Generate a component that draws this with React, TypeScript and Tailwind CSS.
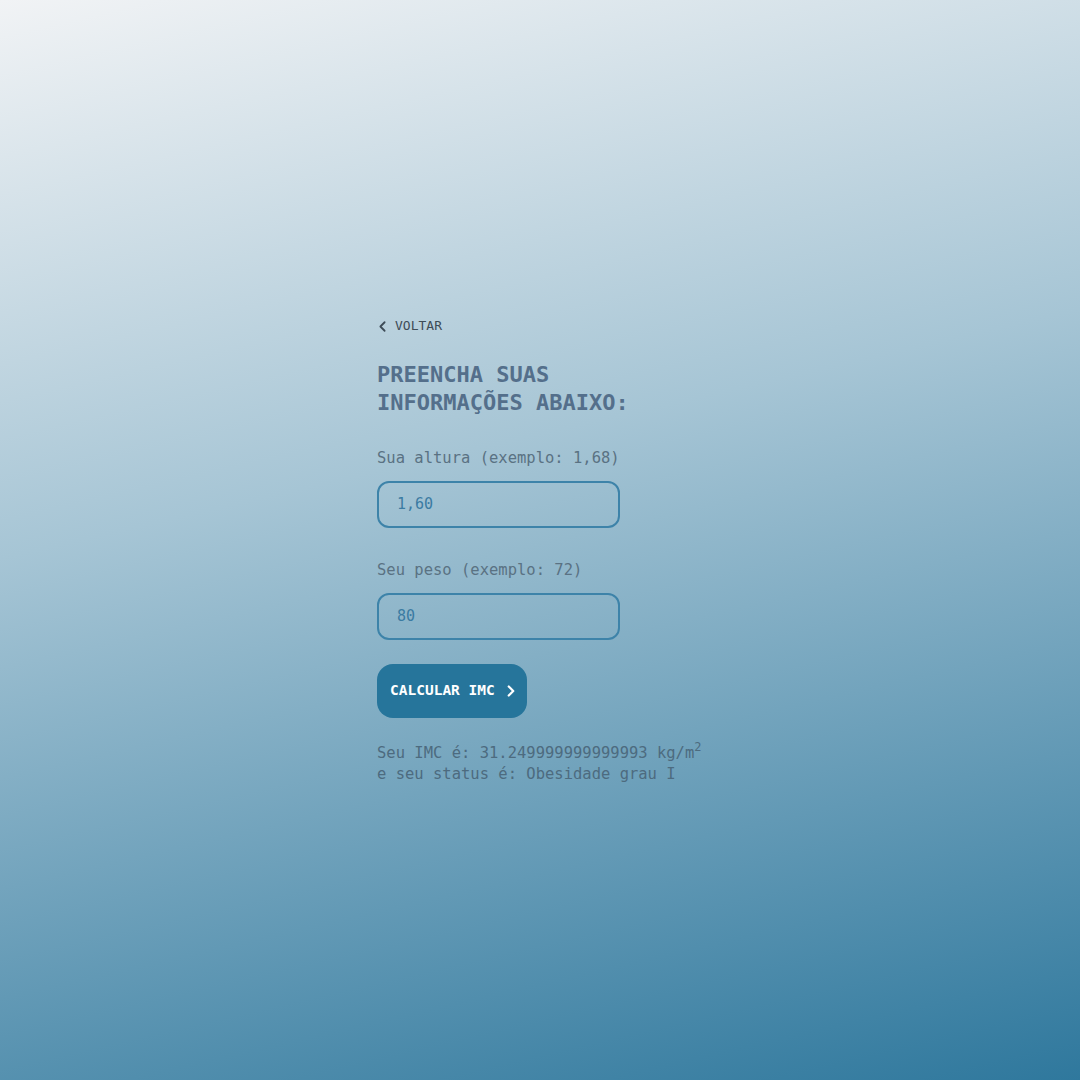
import { ChevronLeft, ChevronRight } from "lucide-react";

const mono = "font-['DejaVu_Sans_Mono','Liberation_Mono',monospace]";

export default function App() {
  return (
    <div
      className={`min-h-screen w-full flex justify-center pt-[317px] bg-[linear-gradient(167deg,#f1f3f5_0%,#a6c5d5_42%,#2f789d_100%)] ${mono}`}
    >
      <div className="w-[326px] flex flex-col items-start">
        <button className="flex items-center gap-[4px] text-[13px] leading-[18px] text-[#3e4c57]">
          <ChevronLeft size={17} strokeWidth={2.5} className="-ml-[3px]" />
          VOLTAR
        </button>

        <h1 className="mt-[26px] text-[22px] leading-[28px] font-bold text-[#546f8b]">
          PREENCHA SUAS
          <br />
          INFORMAÇÕES ABAIXO:
        </h1>

        <label className="mt-[30px] text-[15.5px] leading-[22px] text-[#5a7283]">
          Sua altura (exemplo: 1,68)
        </label>
        <div className="mt-[12px] w-[243px] h-[47px] rounded-[12px] border-2 border-[#3d83a9] flex items-center px-[18px] text-[15px] text-[#3b7ba2]">
          1,60
        </div>

        <label className="mt-[31px] text-[15.5px] leading-[22px] text-[#5a7283]">
          Seu peso (exemplo: 72)
        </label>
        <div className="mt-[12px] w-[243px] h-[47px] rounded-[12px] border-2 border-[#3d83a9] flex items-center px-[18px] text-[15px] text-[#3b7ba2]">
          80
        </div>

        <button className="mt-[24px] w-[150px] h-[54px] rounded-[16px] bg-[#26759b] flex items-center pl-[13px] gap-[7px] text-white text-[14.5px] font-bold">
          CALCULAR IMC
          <ChevronRight size={18} strokeWidth={3} />
        </button>

        <p className="mt-[25px] text-[15.5px] leading-[21px] text-[#4d6b7f] whitespace-nowrap">
          Seu IMC é: 31.249999999999993 kg/m<sup className="text-[12px] -top-[7px]">2</sup>
          <br />e seu status é: Obesidade grau I
        </p>
      </div>
    </div>
  );
}
